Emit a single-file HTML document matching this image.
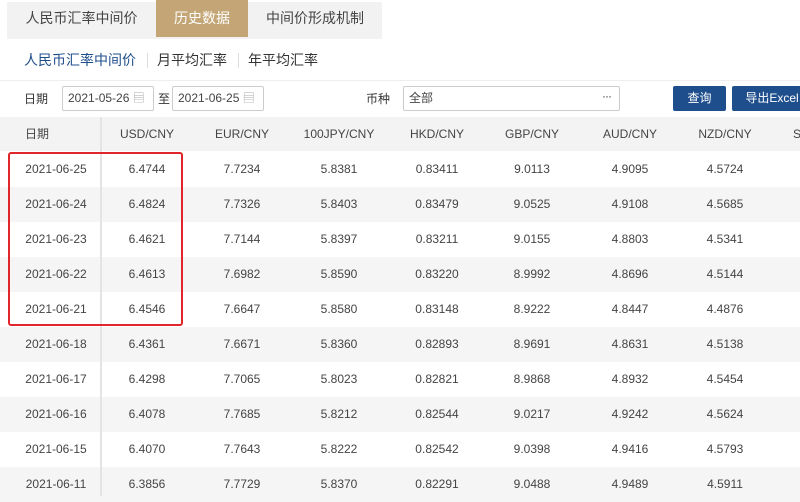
<!DOCTYPE html>
<html><head><meta charset="utf-8"><style>
*{margin:0;padding:0;box-sizing:border-box}
body{width:800px;height:496px;overflow:hidden;background:#fff;font-family:"Liberation Sans","Noto Sans CJK SC",sans-serif;color:#333;position:relative}
.a{position:absolute}
.tabs{left:7px;top:2px;width:375px;height:37px;background:#f2f2f2}
.tab{top:0;height:37px;line-height:37px;font-size:14px;color:#444;text-align:center}
.sub{top:50px;font-size:14px}
.inp{top:86px;height:25px;border:1px solid #ccc;border-radius:2px;font-size:12px;line-height:23px;padding-left:5px;color:#444}
.btn{top:86px;height:25px;background:#1f4e8c;color:#fff;font-size:12px;line-height:25px;text-align:center;border-radius:2px}
.hdr{left:0;top:117px;width:800px;height:34px;background:#f3f3f3}
.row{left:0;width:800px;height:35px}
.c{position:absolute;font-size:12px;color:#444;transform:translateX(-50%);white-space:nowrap}
</style></head><body>
<div class="a tabs"></div>
<div class="a tab" style="left:7px;width:149px">人民币汇率中间价</div>
<div class="a tab" style="left:156px;width:92px;background:#c4a676;color:#fff">历史数据</div>
<div class="a tab" style="left:248px;width:134px">中间价形成机制</div>
<div class="a sub" style="left:24px;color:#1f4e8c">人民币汇率中间价</div>
<div class="a" style="left:147px;top:53px;width:1px;height:15px;background:#ddd"></div>
<div class="a sub" style="left:157px">月平均汇率</div>
<div class="a" style="left:238px;top:53px;width:1px;height:15px;background:#ddd"></div>
<div class="a sub" style="left:248px">年平均汇率</div>
<div class="a" style="left:0;top:80px;width:800px;height:1px;background:#eee"></div>
<div class="a" style="left:24px;top:90px;font-size:12px">日期</div>
<div class="a inp" style="left:62px;width:92px">2021-05-26 <span style="color:#aaa">▤</span></div>
<div class="a" style="left:158px;top:90px;font-size:12px">至</div>
<div class="a inp" style="left:172px;width:92px">2021-06-25 <span style="color:#aaa">▤</span></div>
<div class="a" style="left:366px;top:90px;font-size:12px">币种</div>
<div class="a inp" style="left:403px;width:217px">全部<span style="position:absolute;right:8px;top:-2px;letter-spacing:-1px">···</span></div>
<div class="a btn" style="left:673px;width:53px">查询</div>
<div class="a btn" style="left:732px;width:80px">导出Excel</div>
<div class="a hdr"></div>
<div id="t"></div>
<div class="a" style="left:100px;top:117px;width:2px;height:379px;background:#e4e4e4"></div>
<div class="a" style="left:8px;top:152px;width:175px;height:174px;border:2px solid #e0262a;border-radius:3px"></div>
<script>
var cols=[56,147,242,339,437,532,630,725,797];
var h=["日期","USD/CNY","EUR/CNY","100JPY/CNY","HKD/CNY","GBP/CNY","AUD/CNY","NZD/CNY","S"];
var d=[["2021-06-25","6.4744","7.7234","5.8381","0.83411","9.0113","4.9095","4.5724"],
["2021-06-24","6.4824","7.7326","5.8403","0.83479","9.0525","4.9108","4.5685"],
["2021-06-23","6.4621","7.7144","5.8397","0.83211","9.0155","4.8803","4.5341"],
["2021-06-22","6.4613","7.6982","5.8590","0.83220","8.9992","4.8696","4.5144"],
["2021-06-21","6.4546","7.6647","5.8580","0.83148","8.9222","4.8447","4.4876"],
["2021-06-18","6.4361","7.6671","5.8360","0.82893","8.9691","4.8631","4.5138"],
["2021-06-17","6.4298","7.7065","5.8023","0.82821","8.9868","4.8932","4.5454"],
["2021-06-16","6.4078","7.7685","5.8212","0.82544","9.0217","4.9242","4.5624"],
["2021-06-15","6.4070","7.7643","5.8222","0.82542","9.0398","4.9416","4.5793"],
["2021-06-11","6.3856","7.7729","5.8370","0.82291","9.0488","4.9489","4.5911"]];
var s="";
h.forEach(function(t,i){s+='<div class="c" style="left:'+(i==0?25:cols[i])+'px;top:'+(i==0?125:127)+'px;transform:'+(i==0?'none':'translateX(-50%)')+'">'+t+'</div>';});
d.forEach(function(r,j){var y=152+j*35;
s+='<div class="a row" style="top:'+y+'px;background:'+(j%2?'#f5f5f5':'#fff')+'"></div>';
r.forEach(function(t,i){s+='<div class="c" style="left:'+cols[i]+'px;top:'+(y+10)+'px">'+t+'</div>';});});
document.getElementById("t").innerHTML=s;
</script>
</body></html>
